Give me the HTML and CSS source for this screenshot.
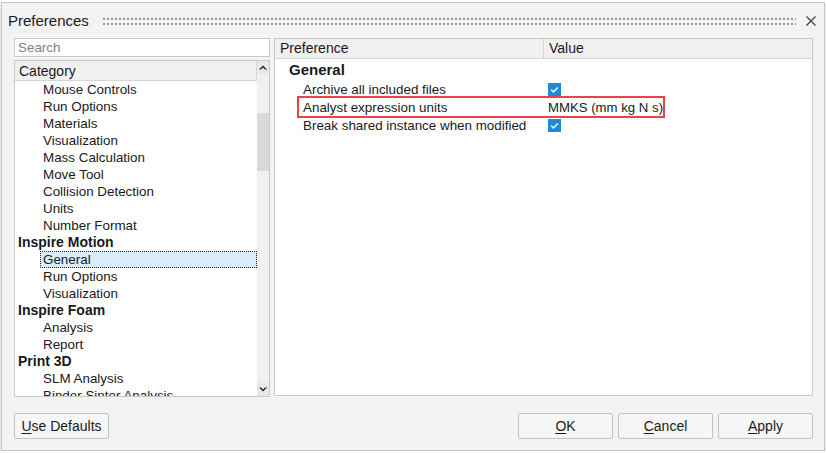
FILE: index.html
```html
<!DOCTYPE html>
<html>
<head>
<meta charset="utf-8">
<link rel="stylesheet" href="styles.css">
</head>
<body>
<div class="window">
  <div class="titlebar">
    <span class="title">Preferences</span>
    <span class="grip"></span>
    <svg class="close" width="10" height="10" viewBox="0 0 10 10"><path d="M0.5 0.5 L9.5 9.5 M9.5 0.5 L0.5 9.5" stroke="#3c3c3c" stroke-width="1.2" fill="none"/></svg>
  </div>
  <div class="main">
    <div class="left">
      <div class="search">Search</div>
      <div class="tree">
        <div class="tree-body">
          <div class="tree-head">Category</div>
          <div class="tree-list">
            <div class="item">Mouse Controls</div>
            <div class="item">Run Options</div>
            <div class="item">Materials</div>
            <div class="item">Visualization</div>
            <div class="item">Mass Calculation</div>
            <div class="item">Move Tool</div>
            <div class="item">Collision Detection</div>
            <div class="item">Units</div>
            <div class="item">Number Format</div>
            <div class="group-item">Inspire Motion</div>
            <div class="item selected">General</div>
            <div class="item">Run Options</div>
            <div class="item">Visualization</div>
            <div class="group-item">Inspire Foam</div>
            <div class="item">Analysis</div>
            <div class="item">Report</div>
            <div class="group-item">Print 3D</div>
            <div class="item">SLM Analysis</div>
            <div class="item">Binder Sinter Analysis</div>
          </div>
        </div>
        <div class="vscroll">
          <div class="sbtn"><svg width="8" height="5" viewBox="0 0 8 5"><path d="M0 4.5 L4 0.5 L8 4.5 L6 4.5 L4 2.5 L2 4.5 Z" fill="#222"/></svg></div>
          <div class="track-a"></div>
          <div class="thumb"></div>
          <div class="track-b"></div>
          <div class="sbtn"><svg width="8" height="5" viewBox="0 0 8 5"><path d="M0 0.5 L4 4.5 L8 0.5 L6 0.5 L4 2.5 L2 0.5 Z" fill="#222"/></svg></div>
        </div>
      </div>
    </div>
    <div class="right">
      <div class="grid-head">
        <div class="col-pref">Preference</div>
        <div class="col-val">Value</div>
      </div>
      <div class="grid-body">
        <div class="group">General</div>
        <div class="prow">
          <span class="pname">Archive all included files</span>
          <span class="pval"><svg class="check" width="13" height="13" viewBox="0 0 13 13"><rect width="13" height="13" fill="#1f8ad6"/><path d="M3.2 6.8 L5.4 9 L9.8 4.4" stroke="#fff" stroke-width="1.5" fill="none"/></svg></span>
        </div>
        <div class="prow highlight">
          <span class="pname">Analyst expression units</span>
          <span class="pval">MMKS (mm kg N s)</span>
        </div>
        <div class="prow">
          <span class="pname">Break shared instance when modified</span>
          <span class="pval"><svg class="check" width="13" height="13" viewBox="0 0 13 13"><rect width="13" height="13" fill="#1f8ad6"/><path d="M3.2 6.8 L5.4 9 L9.8 4.4" stroke="#fff" stroke-width="1.5" fill="none"/></svg></span>
        </div>
      </div>
    </div>
  </div>
  <div class="footer">
    <div class="btn"><u>U</u>se Defaults</div>
    <div class="spacer"></div>
    <div class="btn"><u>O</u>K</div>
    <div class="btn"><u>C</u>ancel</div>
    <div class="btn"><u>A</u>pply</div>
  </div>
</div>
</body>
</html>
```

FILE: styles.css
```css
html, body {
  margin: 0;
  padding: 0;
  background: #ffffff;
}
body {
  padding: 2px 1px 0 1px;
  font-family: "Liberation Sans", Arial, sans-serif;
  font-size: 13.4px;
  color: #1a1a1a;
}
.window {
  box-sizing: border-box;
  width: 824px;
  height: 449px;
  border: 1px solid #c4c4c4;
  background: #f3f3f3;
  display: flex;
  flex-direction: column;
  box-shadow: 0 2px 1px #8c8c8c;
}
.titlebar {
  height: 35px;
  display: flex;
  align-items: center;
  padding-left: 6px;
  padding-right: 8px;
}
.title {
  font-size: 15px;
  color: #1a1a1a;
  line-height: 18px;
  margin-top: 1px;
}
.grip {
  flex: 1;
  height: 7px;
  margin-left: 14px;
  margin-right: 10px;
  margin-top: 1px;
  background-image: radial-gradient(circle at 1px 1px, #959595 1px, transparent 1.2px);
  background-size: 4px 5px;
}
.close {
  display: block;
  margin-top: 1px;
}
.main {
  display: flex;
  height: 359px;
  padding-left: 12px;
  padding-right: 11px;
  gap: 4px;
}
.left {
  width: 256px;
  display: flex;
  flex-direction: column;
  gap: 3px;
}
.search {
  box-sizing: border-box;
  height: 19px;
  border: 1px solid #c8c8c8;
  background: #fff;
  color: #808080;
  line-height: 17px;
  padding-left: 3px;
}
.tree {
  box-sizing: border-box;
  height: 337px;
  border: 1px solid #c8c8c8;
  background: #fff;
  display: flex;
  overflow: hidden;
}
.tree-body {
  flex: 1;
  min-width: 0;
  overflow: hidden;
}
.tree-head {
  box-sizing: border-box;
  height: 20px;
  background: #f0f0f0;
  border-bottom: 1px solid #d6d6d6;
  border-right: 1px solid #d6d6d6;
  line-height: 20px;
  padding-left: 4px;
  font-size: 14px;
}
.tree-list {
  display: flex;
  flex-direction: column;
}
.item {
  box-sizing: border-box;
  height: 17px;
  line-height: 17px;
  margin-left: 25px;
  padding-left: 3px;
  white-space: nowrap;
}
.item.selected {
  background: #d9eefa;
  outline: 1px dotted #222;
  outline-offset: -1px;
}
.group-item {
  height: 17px;
  line-height: 17px;
  padding-left: 3px;
  font-weight: bold;
  font-size: 14px;
  white-space: nowrap;
}
.vscroll {
  width: 12px;
  display: flex;
  flex-direction: column;
  background: #f0f0f0;
}
.sbtn {
  height: 13px;
  display: flex;
  align-items: center;
  justify-content: center;
  background: #e8e8e8;
}
.track-a {
  height: 39px;
}
.thumb {
  height: 58px;
  background: #d9d9d9;
}
.track-b {
  flex: 1;
}
.right {
  flex: 1;
  box-sizing: border-box;
  height: 358px;
  border: 1px solid #c8c8c8;
  background: #fff;
  display: flex;
  flex-direction: column;
}
.grid-head {
  height: 19px;
  background: #f0f0f0;
  border-bottom: 1px solid #d6d6d6;
  display: flex;
  line-height: 19px;
  font-size: 14px;
}
.col-pref {
  width: 269px;
  padding-left: 5px;
  box-sizing: border-box;
  border-right: 1px solid #d6d6d6;
}
.col-val {
  padding-left: 5px;
}
.grid-body {
  display: flex;
  flex-direction: column;
}
.group {
  height: 21px;
  line-height: 21px;
  padding-left: 14px;
  font-weight: bold;
  font-size: 15px;
}
.prow {
  display: flex;
  align-items: center;
  height: 18px;
  margin-left: 24px;
  width: 364px;
  white-space: nowrap;
}
.prow.highlight {
  outline: 2px solid #e9434a;
}
.pname {
  box-sizing: border-box;
  flex: 0 0 245px;
  padding-left: 4px;
}
.pval {
  flex: 0 0 auto;
  padding-left: 4px;
  display: flex;
  align-items: center;
  font-size: 13.2px;
}
.check {
  display: block;
}
.footer {
  display: flex;
  padding: 16px 11px 0 12px;
  gap: 5px;
}
.spacer {
  flex: 1;
}
.btn {
  box-sizing: border-box;
  width: 95px;
  height: 26px;
  border: 1px solid #c2c2c2;
  border-radius: 2px;
  background: #f6f6f6;
  text-align: center;
  line-height: 24px;
  font-size: 14px;
}
.btn u {
  text-decoration-thickness: 1px;
  text-underline-offset: 2px;
}
```
